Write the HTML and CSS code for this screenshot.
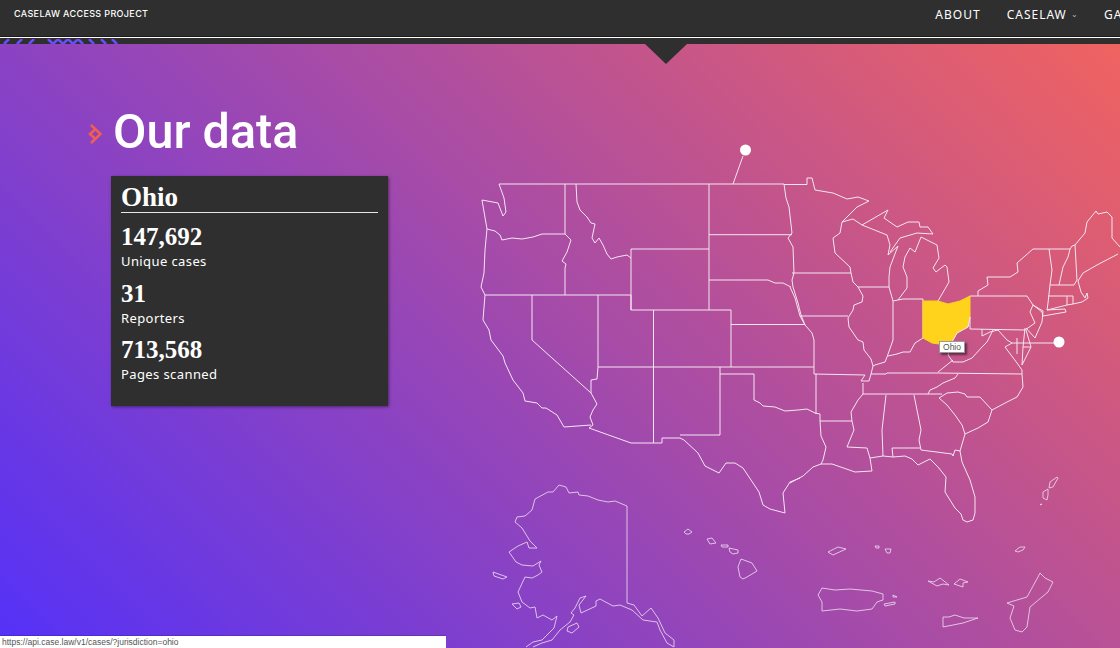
FILE: index.html
```html
<!DOCTYPE html>
<html lang="en">
<head>
    <meta charset="UTF-8">
    <meta name="viewport" content="width=device-width, initial-scale=1.0">
    <title>Caselaw Access Project</title>
    <link rel="stylesheet" href="styles.css">
</head>
<body>
    <header class="topbar">
        <a class="brand" href="#">CASELAW ACCESS PROJECT</a>
        <nav class="nav">
            <a href="#">ABOUT</a>
            <a href="#">CASELAW <span class="caret">&#8964;</span></a>
            <a href="#">GALLERY</a>
        </nav>
    </header>

    <div class="strip">
        <svg class="strip-pattern" width="120" height="5" viewBox="0 0 120 5">
            <path d="M4 5L9 0M17 5L22 0M29 5L34 0M48 0L53 5M53 5L58 0M58 0L63 5M63 5L68 0M68 0L73 5M73 5L78 0M78 0L83 5M89 0L94 5M101 0L106 5M112 0L117 5"/>
        </svg>
    </div>

    <main class="section">
        <div class="notch"></div>

        <h1 class="title">
            <svg class="title-mark" width="14" height="20" viewBox="0 0 14 20">
                <path d="M3 1L12.5 10L3 19M7 5.500L2 10L7 14.500"/>
            </svg>
            Our data
        </h1>

        <section class="card">
            <h2 class="card-name">Ohio</h2>
            <div class="stat">
                <div class="stat-num">147,692</div>
                <div class="stat-label">Unique cases</div>
            </div>
            <div class="stat">
                <div class="stat-num">31</div>
                <div class="stat-label">Reporters</div>
            </div>
            <div class="stat">
                <div class="stat-num">713,568</div>
                <div class="stat-label">Pages scanned</div>
            </div>
        </section>

        <svg class="map" width="640" height="508" viewBox="480 140 640 508">
            <!-- west -->
            <path d="M733 184L743 156M499 184H784M499 184L504 198L506 212L503 216L498 203L482 200L487 229L495 231L500 235L502 240L512 238L522 239L533 237L542 234H565M487 229L485 250L484 273L481 287L485 295H631M565 184V234L571 240L567 252L562 261L566 264L565 268V295"/>
            <path d="M576 184L577 202L580 210L587 217L591 223L595 224L592 238L595 243L599 238L603 245L607 254L611 259L617 257L627 255L631 258"/>
            <path d="M631 249H709V310H631ZM709 184V249M709 310H731M709 234.700H792M709 280H768L775 283L783 283L791 287M784 184L786 198L789 207L792 233L788 238L793 247L794 273L792 280L793 287L798 303L801 315L805 325L812 333L814 340V374"/>
            <path d="M631 295V310M653.500 310V443M731 310V367M731 324.500H805M598 295V367L597 379L591 380V393L597 404L593 410L590 417L593 425L589 428L631 443H662V438H680L684 440L698 453L705 466L719 473L726 463H735L743 468L759 492L763 505L770 509L785 513L783 493L790 482L800 478"/>
            <path d="M532 295V340L591 393M598 367H814M720 367V435H680M720 374H754V400L760 403L763 406L775 407L785 411L798 410L807 409L815 413L820 414V421L821 436L826 447L823 460L821 464L813 467L803 476L790 483M485 295L483 320L489 330L491 340L503 356L505 363L513 380L523 393L525 401L537 403L542 408L546 408L557 415L564 427L591 425"/>
            <!-- midwest and lakes -->
            <path d="M784 184.500H807V178H812L815 190L833 193L847 199L858 197L869 201L857 207L842 222L840 233L833 238L835 253L850 267L851 273L792 273M851 273L853 282L858 287L863 296L862 302L854 305L853 310L848 318L849 327L858 340L863 342L864 350L871 359L873 366M800 316H848M790 287L795 298L800 316L805 325M842 222L853 219L862 225L887 235L890 245L888 255L898 246L890 267L889 277L889 287H858"/>
            <path d="M889 287L893 301V340L887 357L885 362L875 365L873 366L871 374M893 301L903 299H923V338L915 343L910 352L903 352L897 354L888 356M862 225L888 210L884 218L897 227L908 222L919 222L920 227L928 227L933 234L917 233L900 238L890 252"/>
            <path d="M898 300L907 288L907 277L903 267L905 257L910 248L915 252L921 237L937 245L939 258L933 268L936 272L945 265L947 267L949 282L938 301"/>
            <path class="ohio" d="M923 301H938L948 304L960 301L970 296V317L968 327L957 333L953 340L939 344L932 343L923 338Z"/>
            <!-- south -->
            <path d="M814 374L865 375L861 381H869L871 374H886L887 373H937L1022 374M816 374V414M820 421H852L851 412L858 400L863 394L863 383M863 394H942M886 395L882 430L883 456M958 374L955 378L943 383L937 387L930 390L928 394M1022 374L1023 387L1017 397L1007 402L992 410L980 397H967L965 394L958 392L947 393L939 398L947 405L955 415L962 425L965 434L978 428L988 422L992 410M914 395L921 430L919 440L921 450L952 454L953 456L955 450L960 451L965 434"/>
            <path d="M960 451L962 462L970 480L975 497L975 513L973 520L967 522L963 520L961 514L955 508L945 492L946 477L938 467L930 459L918 465L912 459L905 456L893 457L892 448H920M893 457L883 456L870 458L872 471L855 472L832 464H821M852 421L854 430L847 447L867 448L870 458"/>
            <!-- east -->
            <path d="M970 317L968 327L957 333L953 340L948 355L953 362L963 362L972 358L982 347L987 342L993 330M953 360L938 372M982 329V336L990 332L998 330L1007 340L1012 343L1005 347L1017 363L1022 370L1022 374M1012 343H1058"/>
            <path d="M970 296H1027L1033 305L1030 312L1035 323L1025 330L970 329V317M978 296V291L988 285L987 277L1010 277L1018 272L1017 263L1033 249H1049L1052 270L1050 285L1048 303L1047 310L1065 309L1066 312L1043 316L1042 312L1033 305L1043 311L1042 322L1035 338L1026 328M1025 328L1023 347L1031 347L1026 330M1023 347L1022 365L1031 347M1017 338V354"/>
            <path d="M1049 249H1070L1072 246L1075 245L1077 280L1074 285H1050M1070 249L1068 257L1063 267L1059 285M1075 245L1085 233L1087 222L1096 211L1098 214L1107 212L1112 217L1112 238L1120 247M1118 254L1097 265L1083 273L1078 281L1081 292L1085 298L1087 293L1088 298L1082 302L1073 304L1073 296H1048M1067 296V305L1047 310M1067 305L1073 304"/>
            <!-- alaska -->
            <path class="fine" d="M627 506V603L634 605L642 616L651 608L658 618L665 633L674 640L674 647L667 643L660 630L657 622L643 620L632 610L620 605L613 606L600 599L596 601V606L581 613L579 605L586 596L580 598L575 608L571 613L574 615L570 622L560 630L552 640L542 643L533 647"/>
            <path class="fine" d="M627 506L615 501L608 502L598 500L588 496L579 495L578 492L569 493L566 487L559 485L553 492H548L535 499L532 510L525 516L517 517L515 522L522 528L530 541L537 548L529 548L527 542L518 546L509 552L516 562L522 565L533 566L541 561L539 565L542 572L538 575L532 578L525 577L518 592L522 602L530 608L535 607L537 618L543 615L552 620L557 616L554 628L542 640L533 642L526 647"/>
            <path class="fine" d="M493 572L507 577L503 579L494 576ZM512 604L519 603L521 607L517 609ZM568 627L577 623L579 627L572 633L567 631Z"/>
            <!-- hawaii and the islands -->
            <path class="fine" d="M684 532L688 529L692 532L689 534L686 534ZM707 539L712 538L716 543L710 544ZM721 545L728 545V547L722 547ZM729 548L738 550V553L733 554L730 552ZM741 559L752 563L757 571L747 577L743 579L740 577L738 567Z"/>
            <path class="fine" d="M828 552L838 547L846 549L833 555ZM875 546H879V548H876ZM885 549H891L890 553H887ZM1015 551L1020 547L1025 547L1023 550L1018 552Z"/>
            <path class="fine" d="M822 588L835 590L850 589L872 591L883 594V600L877 602L872 609L857 611L840 609L822 611V602L818 595ZM884 604L895 602V604L885 606ZM893 595L897 597H893Z"/>
            <path class="fine" d="M928 581L934 582L940 578L949 585L943 584L937 586ZM954 584L960 579L968 582L963 583L963 587L957 585ZM943 617L949 617L955 615L964 618L978 618L963 623L943 627Z"/>
            <path class="fine" d="M1040 573L1045 578L1053 582L1048 592L1030 607L1027 627L1022 632L1015 630L1010 618L1014 606L1007 603L1017 600L1027 597L1038 577Z"/>
            <path class="fine" d="M1057 477L1050 482L1049 488L1053 487L1058 478ZM1048 489L1043 492L1043 498L1047 500L1048 495ZM1040 504.500L1042 504L1041 505Z"/>
            <!-- callout pins -->
            <circle class="pin" cx="745.500" cy="150" r="5.500"/>
            <circle class="pin" cx="1059" cy="342" r="5.500"/>
        </svg>

        <div class="tooltip">Ohio</div>
    </main>

    <div class="status">https://api.case.law/v1/cases/?jurisdiction=ohio</div>
</body>
</html>
```

FILE: styles.css
```css
body {
    margin: 0;
    height: 648px;
    overflow: hidden;
    position: relative;
    font-family: "Noto Sans", sans-serif;
    background-color: #2f2f2f;
    color: white;
}
a {
    color: inherit;
    text-decoration: none;
}
.topbar {
    display: flex;
    align-items: center;
    height: 37px;
    padding: 0 0 9px 14px;
    box-sizing: border-box;
    background-color: #2f2f2f;
    border-bottom: 1px solid #1c1c1c;
}
.brand {
    font-family: Inter, sans-serif;
    font-size: 9px;
    font-weight: 500;
    letter-spacing: 0.350px;
    white-space: nowrap;
}
.nav {
    display: flex;
    flex-shrink: 0;
    gap: 26px;
    margin-left: 787px;
    padding-top: 1px;
    font-size: 12px;
    letter-spacing: 1px;
    white-space: nowrap;
}
.caret {
    font-size: 8px;
    letter-spacing: 0;
    color: #bbbbbb;
    vertical-align: 2px;
}
.strip {
    height: 7px;
    border-top: 1px solid white;
    box-sizing: border-box;
    background-color: #2f2f2f;
}
.strip-pattern {
    display: block;
    margin-top: 1px;
}
.strip-pattern path {
    fill: none;
    stroke: #6a4cff;
    stroke-width: 2.600;
}
.section {
    position: relative;
    height: 604px;
    padding-top: 58px;
    box-sizing: border-box;
    background: linear-gradient(45deg, #5431f8 0%, #f06360 100%);
}
.notch {
    position: absolute;
    top: 0;
    left: 645px;
    border-top: 20px solid #2f2f2f;
    border-left: 21px solid transparent;
    border-right: 21px solid transparent;
}
.title {
    display: flex;
    align-items: center;
    gap: 11px;
    margin: 0 0 0 88px;
    height: 60px;
    font-family: Roboto, sans-serif;
    font-size: 48.500px;
    font-weight: 500;
    line-height: 60px;
}
.title-mark {
    flex-shrink: 0;
    margin-top: 4px;
}
.title-mark path {
    fill: none;
    stroke: #f2604c;
    stroke-width: 2.500;
}
.card {
    width: 277px;
    height: 230px;
    margin: 14px 0 0 111px;
    padding: 5px 10px 0;
    box-sizing: border-box;
    background-color: #2f2f2f;
    box-shadow: 1px 1px 3px rgba(0, 0, 0, 0.45);
}
.card-name {
    margin: 0 0 9px;
    padding-bottom: 1px;
    height: 32px;
    box-sizing: border-box;
    border-bottom: 1px solid #e8e8e8;
    font-family: "Liberation Serif", serif;
    font-size: 27px;
    font-weight: 700;
    line-height: 32px;
}
.stat {
    height: 56.500px;
}
.stat-num {
    font-family: "Liberation Serif", serif;
    font-size: 25px;
    font-weight: 700;
    line-height: 30px;
}
.stat-label {
    font-size: 13px;
    letter-spacing: 0.400px;
    line-height: 18px;
}
.map {
    position: absolute;
    top: 96px;
    left: 480px;
}
.map path {
    fill: none;
    stroke: #f5e6f2;
    stroke-width: 1;
    stroke-linejoin: round;
}
.map path.fine {
    stroke: #e6d0ea;
    stroke-width: 0.900;
}
.map path.ohio {
    fill: #ffd21c;
    stroke: #ffd21c;
}
.map .pin {
    fill: white;
}
.tooltip {
    position: absolute;
    top: 297px;
    left: 939px;
    width: 26px;
    height: 12px;
    border: 1px solid #999999;
    box-sizing: border-box;
    background-color: white;
    box-shadow: 2px 2px 2px rgba(0, 0, 0, 0.5);
    color: #555555;
    font-family: "Liberation Sans", sans-serif;
    font-size: 8.500px;
    line-height: 10px;
    text-align: center;
}
.status {
    position: absolute;
    left: 0;
    bottom: 0;
    width: 446px;
    height: 12px;
    padding-left: 2px;
    box-sizing: border-box;
    background-color: white;
    box-shadow: 0 -1px 0 rgba(0, 0, 0, 0.15);
    color: #555555;
    font-family: "Liberation Sans", sans-serif;
    font-size: 8.500px;
    line-height: 12px;
}
```
